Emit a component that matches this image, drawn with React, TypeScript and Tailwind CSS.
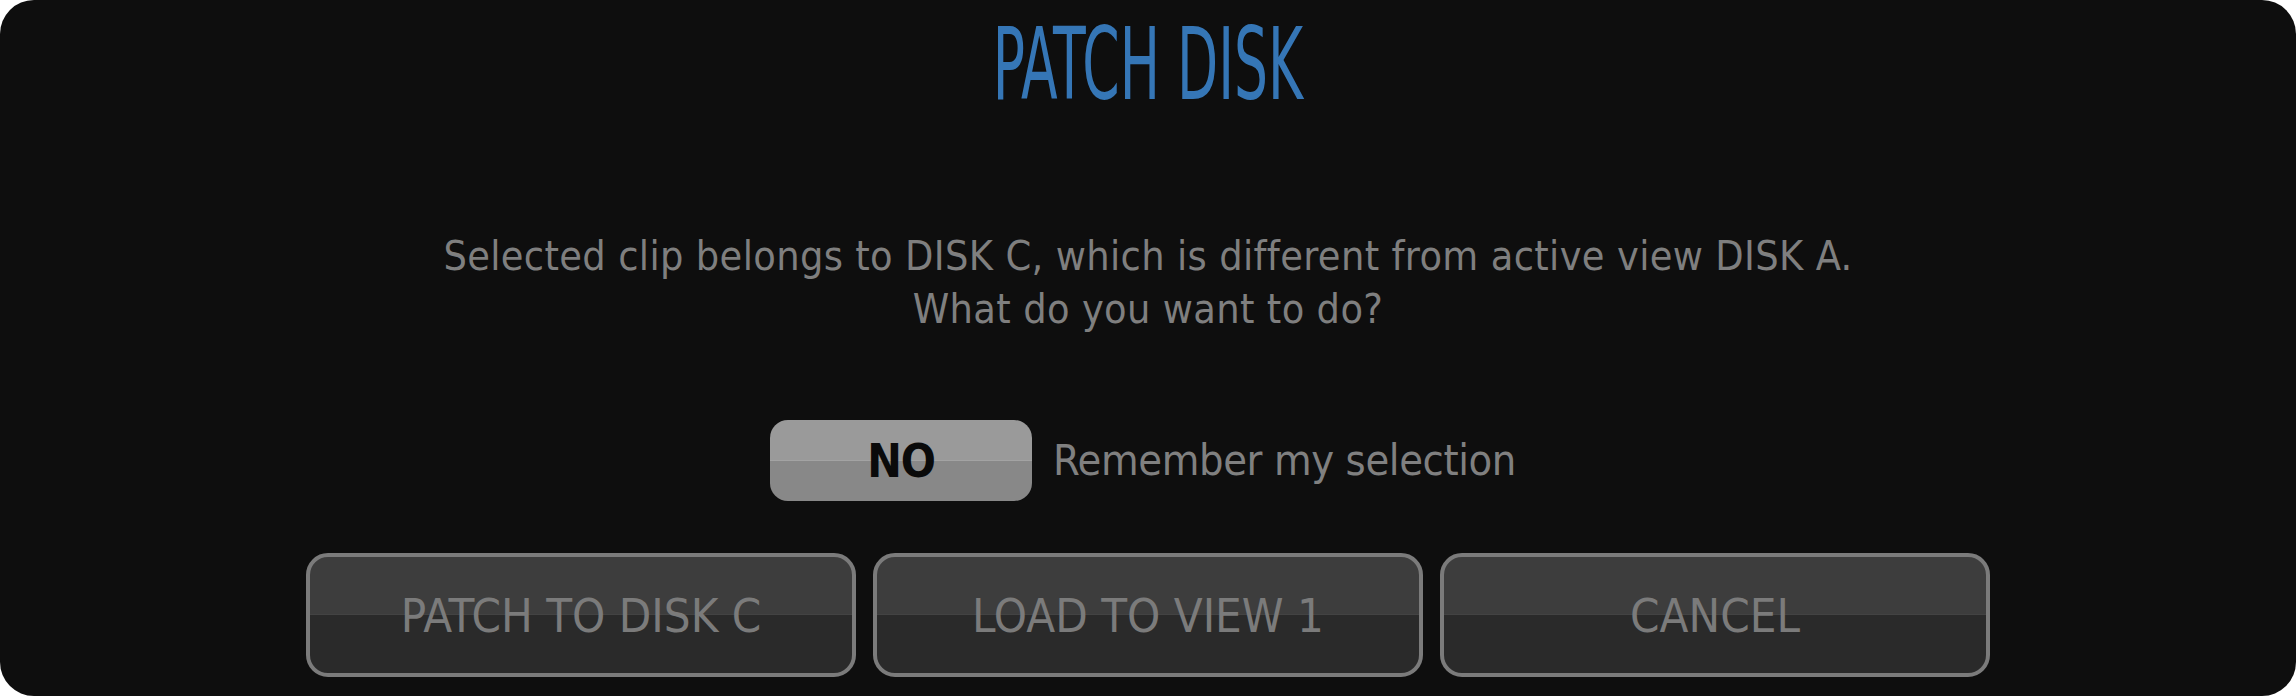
const font = { fontFamily: '"Liberation Sans Narrow", "DejaVu Sans Condensed", "Liberation Sans", sans-serif' };

const actions = ["PATCH TO DISK C", "LOAD TO VIEW 1", "CANCEL"];

export default function App() {
  return (
    <div className="h-[696px] w-[2296px] bg-white" style={font}>
      <div className="flex h-full w-full flex-col items-center rounded-[34px] bg-[#0e0e0e]">
        <div className="pt-[15px]">
          <h1 className="inline-block scale-x-[0.595] text-[100px] leading-none font-light text-[#3576b6]">
            PATCH DISK
          </h1>
        </div>

        <p className="mt-[115px] text-center text-[41px] leading-[53px] tracking-[0.35px] text-[#7f7f7f]">
          Selected clip belongs to DISK C, which is different from active view DISK A.
          <br />
          What do you want to do?
        </p>

        <div className="mt-[84px] flex items-center gap-[21px] pr-[10px]">
          <button className="flex h-[81px] w-[262px] items-center justify-center rounded-[18px] bg-[linear-gradient(to_bottom,#9a9a9a_49%,#a3a3a3_49%,#a3a3a3_51%,#888888_51%)] text-[46px] leading-none font-bold tracking-[-1px] text-[#0a0a0a]">
            NO
          </button>
          <span className="text-[43px] leading-none tracking-[-0.4px] text-[#808080]">Remember my selection</span>
        </div>

        <div className="mt-[52px] flex gap-[17px]">
          {actions.map((label) => (
            <button
              key={label}
              className="flex h-[124px] w-[550px] items-center justify-center rounded-[22px] border-4 border-[#7b7b7b] bg-[linear-gradient(to_bottom,#3d3d3d_49%,#434343_49%,#434343_50%,#2a2a2a_50%)] text-[47px] leading-none text-[#7b7b7b]"
            >
              {label}
            </button>
          ))}
        </div>
      </div>
    </div>
  );
}
